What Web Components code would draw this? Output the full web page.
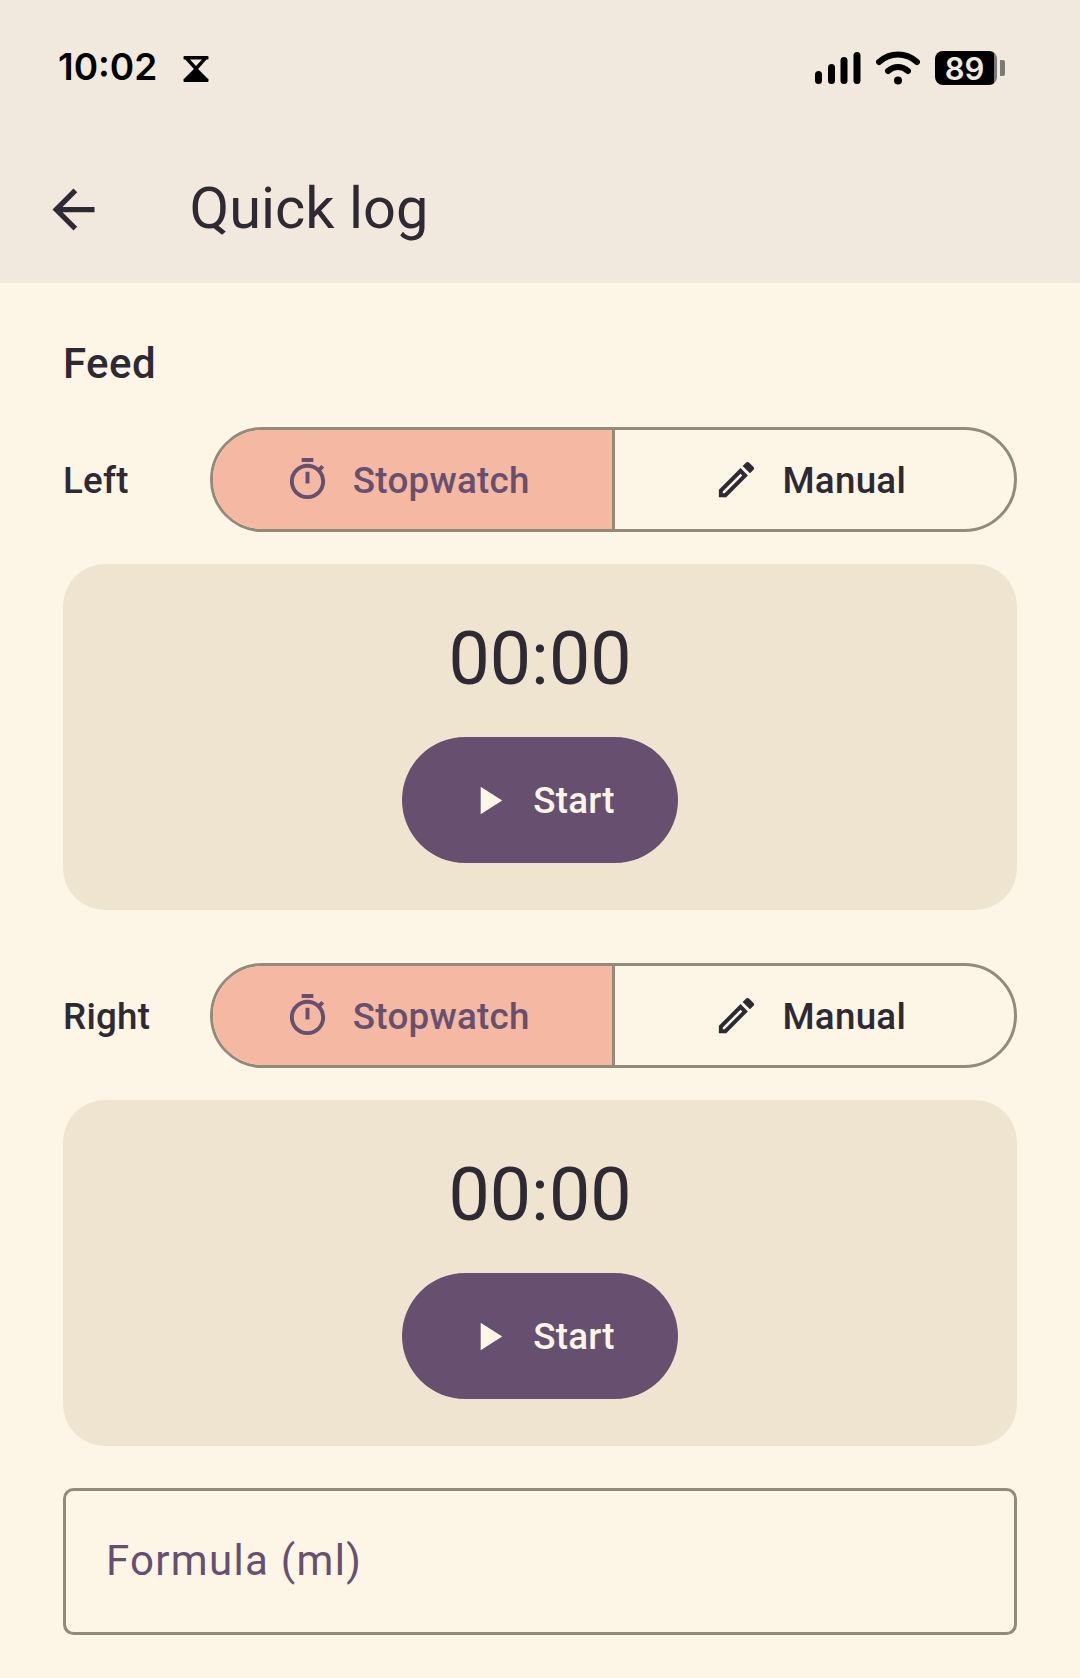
<!DOCTYPE html>
<html lang="en"><head><meta charset="utf-8"><title>Quick log</title>
<style>
html,body{margin:0;padding:0}
body{width:1080px;height:1678px;overflow:hidden;background:#fdf5e6;font-family:Roboto,"Liberation Sans",sans-serif;color:#2e2a33}
</style></head><body>
<quick-log-page>
  <status-bar slot="top" time="10:02" battery="89"></status-bar>
  <app-bar slot="top">Quick log</app-bar>
  <section-title>Feed</section-title>
  <side-row label="Left"></side-row>
  <timer-card value="00:00"></timer-card>
  <side-row label="Right" class="second"></side-row>
  <timer-card value="00:00"></timer-card>
  <text-field class="formula">Formula (ml)</text-field>
</quick-log-page>
<script>
const el=(tag,html)=>customElements.define(tag,class extends HTMLElement{
  constructor(){super();this.attachShadow({mode:'open'}).innerHTML=typeof html==='function'?html(this):html}
  connectedCallback(){if(typeof html==='function')this.shadowRoot.innerHTML=html(this)}
});
el('quick-log-page',`<style>
:host{display:block}
main{display:flex;flex-direction:column;padding:48px 63px 0}
::slotted(side-row){margin-top:33px}
::slotted(side-row.second){margin-top:53px}
::slotted(timer-card){margin-top:32px}
::slotted(text-field){margin-top:41.500px}
</style><slot name="top"></slot><main><slot></slot></main>`);
el('status-bar',h=>`<style>
:host{display:flex;align-items:center;justify-content:space-between;height:134px;background:#f2e9de;padding:0 75px 0 58px;box-sizing:border-box;color:#000}
.l{display:flex;align-items:center;gap:26px;font:600 37px/1 Inter,Roboto,sans-serif}
.l span{margin-top:-2px}
svg{display:block;margin-top:3px}
status-icons{margin-top:2px}
</style><div class="l"><span>${h.getAttribute('time')}</span>
<svg width="26" height="26" viewBox="0 0 25 26"><path fill="#000" fill-rule="evenodd" d="M1 0h23a1 1 0 0 1 1 1v1.500a1 1 0 0 1-1 1h-1L14.600 13 24 22.500h0a1 1 0 0 1 1 1V25a1 1 0 0 1-1 1H1a1 1 0 0 1-1-1v-1.500a1 1 0 0 1 1-1L10.400 13 1.800 3.500H1a1 1 0 0 1-1-1V1a1 1 0 0 1 1-1zM6.500 3.500L12.500 10 18.500 3.500z"/></svg></div>
<status-icons battery="${h.getAttribute('battery')}"></status-icons>`);
el('status-icons',h=>`<style>
:host{display:flex;align-items:center;gap:15px;color:#000}
svg{display:block}
.bat{display:flex;align-items:center;gap:3px}
.body{width:62px;height:34px;border-radius:8px;background:linear-gradient(90deg,#000 95%,#7d7a74 95%);color:#f2e9de;font:600 31px/36px Inter,Roboto,sans-serif;text-align:center;padding-right:3px;box-sizing:border-box}
.nub{width:5px;height:16px;background:#7d7a74;border-radius:0 2px 2px 0}
</style>
<svg width="46" height="32" viewBox="0 0 46 32"><g fill="#000"><rect x="0" y="19" width="7" height="13" rx="3.500"/><rect x="13" y="12" width="7" height="20" rx="3.500"/><rect x="25.500" y="5" width="7" height="27" rx="3.500"/><rect x="38.500" y="0" width="7" height="32" rx="3.500"/></g></svg>
<svg width="44" height="34" viewBox="0 0 44 34"><g fill="none" stroke="#000" stroke-width="6" stroke-linecap="round"><path d="M3 11C14 1 30 1 41 11"/><path d="M12 20C18 14.500 26 14.500 32 20"/></g><circle cx="22" cy="29.500" r="4" fill="#000"/></svg>
<div class="bat"><div class="body">${h.getAttribute('battery')}</div><div class="nub"></div></div>`);
el('app-bar',`<style>
:host{display:flex;align-items:center;height:149px;background:#f2e9de;padding:1px 0 0 42px;box-sizing:border-box;font:400 57.750px/1 Roboto,sans-serif;color:#2e2a33}
svg{display:block;width:63px;height:63px;margin-right:84.500px;fill:currentColor}
</style><svg viewBox="0 0 24 24"><path d="M20 11H7.830l5.590-5.590L12 4l-8 8 8 8 1.410-1.410L7.830 13H20v-2z"/></svg><slot></slot>`);
el('section-title',`<style>:host{display:block;font:500 42px/63px Roboto,sans-serif;letter-spacing:.4px;color:#2e2a33;padding-top:1px;margin-bottom:-1px}</style><slot></slot>`);
el('side-row',h=>`<style>
:host{display:flex;align-items:center;height:105px}
.lab{width:147px;flex:none;box-sizing:border-box;padding-top:4px;font:500 36.750px/1 Roboto,sans-serif;letter-spacing:.26px;color:#2e2a33}
seg-group{flex:1}
</style><div class="lab">${h.getAttribute('label')}</div><seg-group></seg-group>`);
el('seg-group',`<style>
:host{display:flex;height:105px;box-sizing:border-box;border:3px solid #948a7a;border-radius:53px;overflow:hidden;font:500 36.750px/1 Roboto,sans-serif;letter-spacing:.26px}
div{display:flex;align-items:center;justify-content:center;gap:22px;box-sizing:border-box}
.on{flex:0 0 401.500px;background:#f4b8a3;color:#67506f;border-right:3px solid #948a7a;padding-right:11px}
.off{flex:1 1 0;color:#2e2a33;padding-right:9px}
span{padding-top:4px}
svg{width:47px;height:47px;fill:currentColor;display:block}
</style>
<div class="on"><svg viewBox="0 0 24 24"><path d="M15 1H9v2h6V1zm-4 13h2V8h-2v6zm8.030-6.610l1.420-1.420c-.43-.51-.9-.99-1.410-1.410l-1.420 1.420C16.070 4.740 14.120 4 12 4c-4.970 0-9 4.030-9 9s4.020 9 9 9 9-4.030 9-9c0-2.120-.74-4.070-1.970-5.610zM12 20c-3.870 0-7-3.130-7-7s3.130-7 7-7 7 3.130 7 7-3.130 7-7 7z"/></svg><span>Stopwatch</span></div>
<div class="off"><svg viewBox="0 0 24 24"><path d="M14.060 9.020l.92.92L5.920 19H5v-.92l9.060-9.060M17.660 3c-.25 0-.51.1-.7.290l-1.830 1.830 3.750 3.750 1.830-1.830c.39-.39.39-1.020 0-1.410l-2.340-2.340c-.2-.2-.45-.29-.71-.29zm-3.600 3.190L3 17.250V21h3.750L17.810 9.940l-3.750-3.750z"/></svg><span>Manual</span></div>`);
el('timer-card',h=>`<style>
:host{display:flex;flex-direction:column;align-items:center;height:346px;box-sizing:border-box;background:#efe4d0;border-radius:42px;padding-top:48px}
.t{font:400 73.500px/94.500px Roboto,sans-serif;color:#2e2a33}
start-button{margin-top:30.500px}
</style><div class="t">${h.getAttribute('value')}</div><start-button>Start</start-button>`);
el('start-button',`<style>
:host{display:flex;align-items:center;gap:21px;height:126px;padding:0 63px;box-sizing:border-box;border-radius:63px;background:#67506f;color:#fdf5e6;font:500 36.750px/1 Roboto,sans-serif;letter-spacing:.26px}
span{padding-top:3px}
svg{width:47px;height:47px;fill:currentColor;display:block}
</style><svg viewBox="0 0 24 24"><path d="M8 5v14l11-7z"/></svg><span><slot></slot></span>`);
el('text-field',`<style>
:host{display:flex;align-items:center;height:147px;box-sizing:border-box;border:3px solid #948a7a;border-radius:10.500px;padding-left:40px;font:400 42px/1 Roboto,sans-serif;letter-spacing:1.300px;color:#67506f}
</style><slot></slot>`);
</script>
</body></html>
